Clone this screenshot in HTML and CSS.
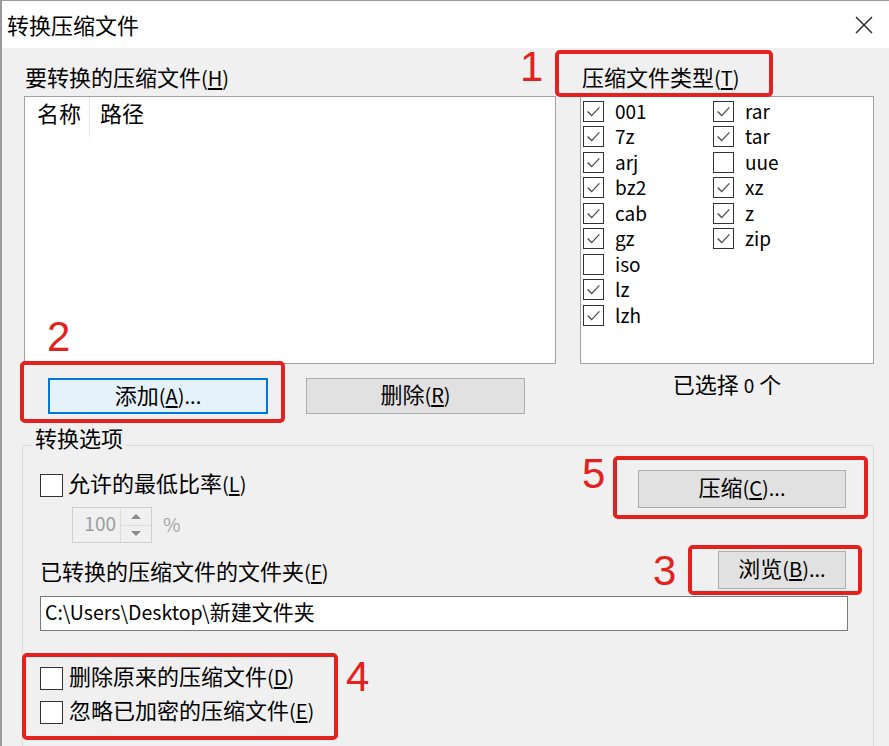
FILE: index.html
```html
<!DOCTYPE html>
<html lang="zh-CN">
<head>
<meta charset="utf-8">
<title>转换压缩文件</title>
<link rel="stylesheet" href="styles.css">
</head>
<body>
<div class="window">
  <div class="titlebar">
    <span class="title">转换压缩文件</span>
    <svg class="close" width="18" height="18" viewBox="0 0 18 18"><path d="M1 1 L17 17 M17 1 L1 17" stroke="#222" stroke-width="1.4" fill="none"/></svg>
  </div>
  <div class="top">
    <div class="col-left">
      <div class="label">要转换的压缩文件<span class="mn">(<u>H</u>)</span></div>
      <div class="filelist">
        <div class="thead">
          <div class="th th-name">名称</div>
          <div class="th th-path">路径</div>
        </div>
      </div>
      <div class="btnrow">
        <button class="btn btn-add focus">添加<span class="mn">(<u>A</u>)...</span></button>
        <button class="btn btn-del">删除<span class="mn">(<u>R</u>)</span></button>
      </div>
    </div>
    <div class="col-right">
      <div class="label label-right">压缩文件类型<span class="mn">(<u>T</u>)</span></div>
      <div class="typelist">
        <div class="ck"><span class="box"><svg viewBox="0 0 21 21"><path d="M4 10.5 L8.5 15 L17 6"/></svg></span>001</div>
        <div class="ck"><span class="box"><svg viewBox="0 0 21 21"><path d="M4 10.5 L8.5 15 L17 6"/></svg></span>7z</div>
        <div class="ck"><span class="box"><svg viewBox="0 0 21 21"><path d="M4 10.5 L8.5 15 L17 6"/></svg></span>arj</div>
        <div class="ck"><span class="box"><svg viewBox="0 0 21 21"><path d="M4 10.5 L8.5 15 L17 6"/></svg></span>bz2</div>
        <div class="ck"><span class="box"><svg viewBox="0 0 21 21"><path d="M4 10.5 L8.5 15 L17 6"/></svg></span>cab</div>
        <div class="ck"><span class="box"><svg viewBox="0 0 21 21"><path d="M4 10.5 L8.5 15 L17 6"/></svg></span>gz</div>
        <div class="ck"><span class="box"></span>iso</div>
        <div class="ck"><span class="box"><svg viewBox="0 0 21 21"><path d="M4 10.5 L8.5 15 L17 6"/></svg></span>lz</div>
        <div class="ck"><span class="box"><svg viewBox="0 0 21 21"><path d="M4 10.5 L8.5 15 L17 6"/></svg></span>lzh</div>
        <div class="ck"><span class="box"><svg viewBox="0 0 21 21"><path d="M4 10.5 L8.5 15 L17 6"/></svg></span>rar</div>
        <div class="ck"><span class="box"><svg viewBox="0 0 21 21"><path d="M4 10.5 L8.5 15 L17 6"/></svg></span>tar</div>
        <div class="ck"><span class="box"></span>uue</div>
        <div class="ck"><span class="box"><svg viewBox="0 0 21 21"><path d="M4 10.5 L8.5 15 L17 6"/></svg></span>xz</div>
        <div class="ck"><span class="box"><svg viewBox="0 0 21 21"><path d="M4 10.5 L8.5 15 L17 6"/></svg></span>z</div>
        <div class="ck"><span class="box"><svg viewBox="0 0 21 21"><path d="M4 10.5 L8.5 15 L17 6"/></svg></span>zip</div>
      </div>
      <div class="count">已选择 <span class="num0">0</span> 个</div>
    </div>
  </div>
  <fieldset class="group">
    <legend class="legend">转换选项</legend>
    <div class="opt-top">
      <div class="opt-left">
        <div class="chk-line"><span class="bigbox"></span><span class="txt">允许的最低比率<span class="mn">(<u>L</u>)</span></span></div>
        <div class="spin-row">
          <div class="spin">
            <div class="spin-val">100</div>
            <div class="spin-btns">
              <div class="spin-half"><span class="tri-up"></span></div>
              <div class="spin-half sep"><span class="tri-down"></span></div>
            </div>
          </div>
          <span class="pct">%</span>
        </div>
      </div>
      <button class="btn btn-compress">压缩<span class="mn">(<u>C</u>)...</span></button>
    </div>
    <div class="folder-row">
      <div class="folder-label">已转换的压缩文件的文件夹<span class="mn">(<u>F</u>)</span></div>
      <button class="btn btn-browse">浏览<span class="mn">(<u>B</u>)...</span></button>
    </div>
    <div class="path-input"><span class="path-latin">C:\Users\Desktop\</span>新建文件夹</div>
    <div class="bottom-checks">
      <div class="chk-row"><span class="bigbox"></span><span class="txt">删除原来的压缩文件<span class="mn">(<u>D</u>)</span></span></div>
      <div class="chk-row"><span class="bigbox"></span><span class="txt">忽略已加密的压缩文件<span class="mn">(<u>E</u>)</span></span></div>
    </div>
  </fieldset>

  <div class="mark mark-1"></div>
  <div class="mark mark-2"></div>
  <div class="mark mark-3"></div>
  <div class="mark mark-4"></div>
  <div class="mark mark-5"></div>
  <span class="num n1">1</span>
  <span class="num n2">2</span>
  <span class="num n3">3</span>
  <span class="num n4">4</span>
  <span class="num n5">5</span>
</div>
</body>
</html>
```

FILE: styles.css
```css
* { box-sizing: border-box; }
html, body { margin: 0; padding: 0; }
body {
  background: #f0f0f0;
  font-family: "Noto Sans CJK SC", "Microsoft YaHei", sans-serif;
  font-size: 22px;
  color: #000;
}
.window {
  position: relative;
  width: 889px;
  height: 746px;
  overflow: hidden;
  border-left: 2px solid #9a9a9a;
  border-top: 1px solid #9a9a9a;
  background: #f0f0f0;
}
.titlebar {
  height: 47px;
  background: #fff;
  display: flex;
  align-items: center;
  justify-content: space-between;
  padding: 0 16px 2px 5px;
}
.title { font-size: 22px; line-height: 30px; }
.close { display: block; margin-top: 2px; }

.mn { font-size: 20px; }
.mn u { text-underline-offset: 2px; }

.top {
  display: grid;
  grid-template-columns: 532px 294px;
  column-gap: 24px;
  padding: 15px 15px 0 22px;
}
.label { line-height: 26px; margin-bottom: 5px; padding-left: 1px; white-space: nowrap; }
.label-right { padding-left: 2px; }

.filelist {
  height: 268px;
  background: #fff;
  border: 1px solid #a0a0a0;
}
.thead { display: flex; height: 40px; }
.th { line-height: 30px; padding-left: 12px; }
.th-name { width: 65px; border-right: 1px solid #e5e5e5; }
.th-path { padding-left: 10px; }

.btnrow { display: flex; gap: 38px; padding-left: 24px; margin-top: 14px; }
.btn {
  height: 36px;
  background: #e1e1e1;
  border: 1px solid #adadad;
  font-family: inherit;
  font-size: 22px;
  color: #000;
  line-height: 28px;
  padding: 0 0 4px;
  text-align: center;
  white-space: nowrap;
}
.btn-add { width: 220px; }
.btn-del { width: 219px; }
.btn.focus { border: 2px solid #0078d7; background: #e5f1fb; }

.typelist {
  height: 268px;
  background: #fff;
  border: 1px solid #a0a0a0;
  padding: 1px 0 0 2px;
  display: grid;
  grid-template-columns: 130px auto;
  grid-template-rows: repeat(9, 25.5px);
  grid-auto-flow: column;
  justify-content: start;
  align-content: start;
}
.ck { display: flex; align-items: center; gap: 11px; font-size: 19px; line-height: 21px; padding-bottom: 1px; }
.box {
  width: 21px;
  height: 21px;
  border: 1px solid #333;
  background: #fff;
  flex: none;
  margin-top: 2px;
}
.box svg { display: block; width: 19px; height: 19px; }
.box svg path { fill: none; stroke: #4a4a4a; stroke-width: 1.4; }
.count { text-align: center; margin-top: 6px; line-height: 26px; }
.num0 { font-size: 19px; }

.group {
  margin: 13px 15px 0 20px;
  padding: 6px 25px 40px 17px;
  border: 1px solid #dcdcdc;
  min-width: 0;
}
.legend {
  margin-left: -8px;
  padding: 0 3px 17px;
  line-height: 20px;
}
.opt-top { display: flex; justify-content: space-between; align-items: flex-start; }
.chk-line { display: flex; align-items: center; gap: 5px; height: 23px; margin-top: 4px; }
.txt { line-height: 23px; padding-bottom: 5px; }
.bigbox { width: 23px; height: 23px; border: 1px solid #333; background: #fff; flex: none; }
.spin-row { display: flex; align-items: center; margin: 10px 0 0 32px; }
.spin { display: flex; width: 80px; height: 36px; border: 1px solid #cfcfcf; background: #f0f0f0; }
.spin-val { width: 47px; text-align: right; color: #9d9d9d; font-size: 19px; line-height: 30px; padding-right: 4px; }
.spin-btns { width: 31px; border-left: 1px solid #dcdcdc; display: flex; flex-direction: column; }
.spin-half { flex: 1; display: flex; align-items: center; justify-content: center; }
.spin-half.sep { border-top: 1px solid #dcdcdc; }
.tri-up { width: 0; height: 0; border-left: 5px solid transparent; border-right: 5px solid transparent; border-bottom: 5px solid #8a8a8a; }
.tri-down { width: 0; height: 0; border-left: 5px solid transparent; border-right: 5px solid transparent; border-top: 5px solid #8a8a8a; }
.pct { margin-left: 11px; color: #a6a6a6; font-size: 19px; padding-bottom: 4px; }

.btn-compress { width: 208px; height: 38px; margin-right: 2px; }
.btn-browse { width: 128px; height: 38px; margin-right: 2px; }
.folder-row { display: flex; justify-content: space-between; align-items: flex-end; margin-top: 8px; }
.folder-label { line-height: 26px; padding-bottom: 4px; white-space: nowrap; }
.path-input {
  margin-top: 7px;
  height: 35px;
  width: 808px;
  border: 1px solid #7a7a7a;
  background: #fff;
  padding-left: 4px;
  line-height: 28px;
  font-size: 21px;
  white-space: nowrap;
}
.path-latin { font-size: 19.5px; }
.bottom-checks { margin-top: 30px; }
.chk-row { display: flex; align-items: center; height: 34px; gap: 6px; white-space: nowrap; }

.mark {
  position: absolute;
  border: 4px solid #e3211f;
  border-radius: 5px;
}
.mark-1 { left: 553px; top: 49px; width: 218px; height: 47px; }
.mark-2 { left: 18px; top: 360px; width: 265px; height: 62px; }
.mark-3 { left: 686px; top: 544px; width: 174px; height: 50px; }
.mark-4 { left: 20px; top: 652px; width: 316px; height: 87px; }
.mark-5 { left: 611px; top: 455px; width: 255px; height: 63px; }
.num {
  position: absolute;
  font-family: "Liberation Sans", Arial, sans-serif;
  font-size: 42px;
  line-height: 1;
  color: #e3211f;
}
.n1 { left: 518px; top: 45px; }
.n2 { left: 45px; top: 315px; }
.n3 { left: 651px; top: 549px; }
.n4 { left: 344px; top: 655px; }
.n5 { left: 580px; top: 452px; }
```
